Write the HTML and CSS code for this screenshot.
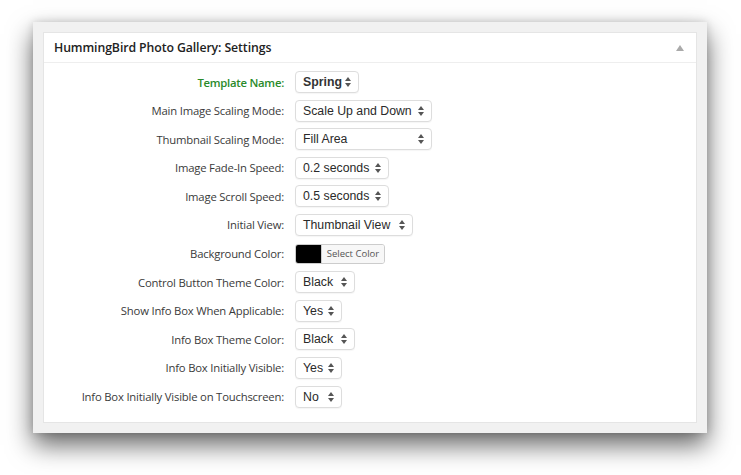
FILE: index.html
```html
<!DOCTYPE html>
<html>
<head>
<meta charset="utf-8">
<link rel="stylesheet" href="styles.css">
</head>
<body>
<div class="frame">
  <div class="postbox">
    <div class="hdr">
      <h3 class="title">HummingBird Photo Gallery: Settings</h3>
      <span class="toggle"></span>
    </div>
    <div class="inside">
      <div class="row"><label class="lbl green">Template Name:</label><span class="sel bold w64">Spring<i class="arr"></i></span></div>
      <div class="row"><label class="lbl">Main Image Scaling Mode:</label><span class="sel w137">Scale Up and Down<i class="arr"></i></span></div>
      <div class="row"><label class="lbl">Thumbnail Scaling Mode:</label><span class="sel w137">Fill Area<i class="arr"></i></span></div>
      <div class="row"><label class="lbl">Image Fade-In Speed:</label><span class="sel w94">0.2 seconds<i class="arr"></i></span></div>
      <div class="row"><label class="lbl">Image Scroll Speed:</label><span class="sel w94">0.5 seconds<i class="arr"></i></span></div>
      <div class="row"><label class="lbl">Initial View:</label><span class="sel w118">Thumbnail View<i class="arr"></i></span></div>
      <div class="row"><label class="lbl">Background Color:</label><span class="picker"><span class="swatch"></span><span class="pbtn">Select Color</span></span></div>
      <div class="row"><label class="lbl">Control Button Theme Color:</label><span class="sel w60">Black<i class="arr"></i></span></div>
      <div class="row"><label class="lbl">Show Info Box When Applicable:</label><span class="sel w47">Yes<i class="arr"></i></span></div>
      <div class="row"><label class="lbl">Info Box Theme Color:</label><span class="sel w60">Black<i class="arr"></i></span></div>
      <div class="row"><label class="lbl">Info Box Initially Visible:</label><span class="sel w47">Yes<i class="arr"></i></span></div>
      <div class="row"><label class="lbl">Info Box Initially Visible on Touchscreen:</label><span class="sel w47">No<i class="arr"></i></span></div>
    </div>
  </div>
</div>
</body>
</html>
```
FILE: styles.css
```css
html, body { margin: 0; padding: 0; background: #fff; }
body { width: 741px; height: 475px; overflow: hidden; font-family: "Open Sans", "DejaVu Sans", sans-serif; }
.frame {
  margin: 22px 0 0 33px;
  width: 654px;
  height: 391px;
  padding: 10px;
  background: #f1f1f1;
  box-shadow: 0 12px 24px rgba(0,0,0,0.6), 0 0 8px rgba(0,0,0,0.15);
}
.postbox {
  height: 389px;
  background: #fff;
  border: 1px solid #e5e5e5;
}
.hdr {
  height: 29px;
  border-bottom: 1px solid #eee;
  display: flex;
  align-items: center;
  justify-content: space-between;
  padding: 0 12px 0 10px;
}
.title { margin: 0; font-size: 12.3px; font-weight: 600; color: #222; letter-spacing: -0.1px; }
.toggle {
  width: 0; height: 0;
  border-left: 4px solid transparent;
  border-right: 4px solid transparent;
  border-bottom: 6px solid #aaa;
}
.inside { padding: 8px 0 0 0; display: flex; flex-direction: column; gap: 6.6px; }
.row { display: flex; align-items: center; height: 22px; }
.lbl {
  width: 240px;
  text-align: right;
  font-size: 11.3px;
  color: #3a3a3a;
  letter-spacing: -0.2px;
  padding-right: 11px;
}
.lbl.green { color: #2a8a2a; font-weight: 600; letter-spacing: -0.25px; }
.sel {
  position: relative;
  box-sizing: border-box;
  height: 22px;
  border: 1px solid #ddd;
  border-radius: 4px;
  background: #fff;
  box-shadow: 0 1px 1px rgba(0,0,0,0.04);
  font-family: "Liberation Sans", Arial, sans-serif;
  font-size: 12.3px;
  color: #2a2a2a;
  padding: 0 0 0 7px;
  line-height: 20px;
}
.sel.bold { font-weight: 700; color: #333; }
.arr {
  position: absolute;
  right: 7px;
  top: 5px;
  width: 6px;
  height: 10px;
}
.arr::before, .arr::after {
  content: "";
  position: absolute;
  left: 0;
  width: 0; height: 0;
  border-left: 3px solid transparent;
  border-right: 3px solid transparent;
}
.arr::before { top: 0; border-bottom: 4px solid #555; }
.arr::after { bottom: 0; border-top: 4px solid #555; }
.w64 { width: 64px; }
.w137 { width: 137px; }
.w94 { width: 94px; }
.w118 { width: 118px; }
.w60 { width: 60px; }
.w47 { width: 47px; }
.picker {
  display: flex;
  height: 20px;
  border: 1px solid #ccc;
  border-radius: 3px;
  overflow: hidden;
  box-sizing: border-box;
}
.swatch { width: 25px; background: #000; }
.pbtn {
  width: 62px;
  background: #f7f7f7;
  border-left: 1px solid #ccc;
  font-size: 9.5px;
  color: #555;
  text-align: center;
  line-height: 18px;
}
```
